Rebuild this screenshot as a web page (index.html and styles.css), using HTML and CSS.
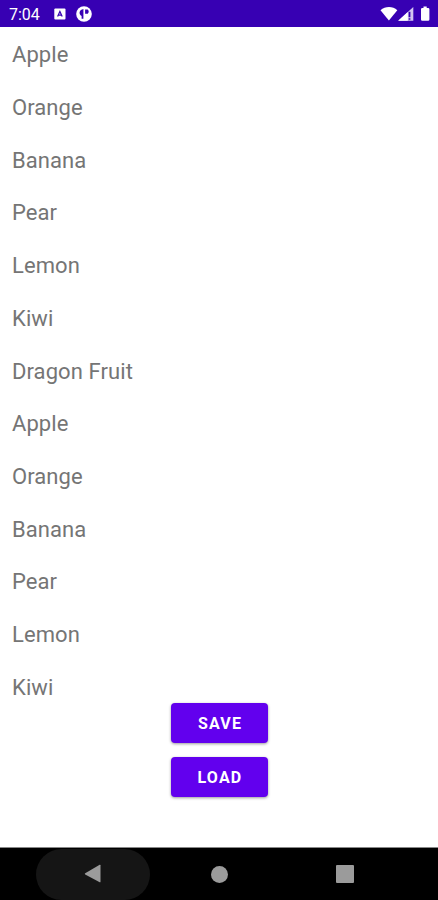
FILE: index.html
```html
<!DOCTYPE html>
<html lang="en">
<head>
<meta charset="utf-8">
<title>Fruit list</title>
<link rel="stylesheet" href="styles.css">
</head>
<body>
<div class="screen">
  <header class="status">
    <span class="time">7:04</span>
    <svg class="app-icon" viewBox="0 0 12 12"><rect x=".3" y=".5" width="11.2" height="11" rx="1" fill="#fff"/><path d="M3.6 8.6 5.9 3.4l2.3 5.2M4.4 7.2h3" fill="none" stroke="#3700b3" stroke-width="1.2"/></svg>
    <svg class="pocket-icon" viewBox="0 0 16 16"><circle cx="8" cy="8" r="7.8" fill="#fff"/><path d="M7.4 3v9.8H5.6V10C3.900 9 3.400 7.700 3.600 6.300 4 4.500 5.400 3.300 7.400 3zM9.100 3.500h2.600q1 .8 1 2.100t-1 2.200H9.100z" fill="#3700b3"/></svg>
    <svg class="signals" viewBox="0 0 54 18">
      <path d="M.5 5.3C5.3.9 12.7.9 17.3 5.3L8.9 15.6z" fill="#fff"/>
      <path d="M18.2 15.7 33.3 2v13.7z" fill="#d3c7f0"/>
      <path d="M18.2 15.7 27.8 7v8.7z" fill="#fff"/>
      <path d="M28.6 6.800h1.800v5.400h-1.800zM28.6 13.200h1.800v1.500h-1.800z" fill="#3700b3"/>
      <path d="M41 4.2q0-1.3 1.3-1.3h1.2V1.6h3.2v1.3h1.4q1.3 0 1.3 1.3v10.3q0 1.3-1.3 1.3h-5.8q-1.3 0-1.3-1.3z" fill="#fff"/>
    </svg>
  </header>
  <main>
    <ul class="list">
      <li>Apple</li><li>Orange</li><li>Banana</li><li>Pear</li><li>Lemon</li><li>Kiwi</li><li>Dragon Fruit</li>
      <li>Apple</li><li>Orange</li><li>Banana</li><li>Pear</li><li>Lemon</li><li>Kiwi</li>
    </ul>
    <div class="actions">
      <button>SAVE</button>
      <button>LOAD</button>
    </div>
  </main>
  <nav class="nav">
    <div class="back"><svg viewBox="0 0 18 20"><path d="M1.2 9.2 15.7.8q.8-.3.8.5v16.4q0 .8-.8.5L1.2 10.4q-.9-.6 0-1.2z" fill="#9b9b9b"/></svg></div>
    <div class="home"></div>
    <div class="recent"></div>
  </nav>
</div>
</body>
</html>
```
FILE: styles.css
```css
body {
  margin: 0;
  background: #fff;
  font-family: Roboto, sans-serif;
}
.screen {
  display: flex;
  flex-direction: column;
  height: 900px;
  overflow: hidden;
}
.status {
  display: flex;
  align-items: center;
  box-sizing: border-box;
  height: 27px;
  padding: 1px 4px 0 9px;
  background: #3700b3;
  color: #fff;
}
.time {
  width: 45px;
  padding-top: 1px;
  font-size: 16px;
  line-height: 20px;
}
.app-icon {
  width: 12px;
  height: 12px;
}
.pocket-icon {
  width: 16px;
  height: 16px;
  margin-left: 10px;
}
.signals {
  width: 54px;
  height: 18px;
  margin-left: auto;
}
main {
  flex: 1;
}
.list {
  height: 676px;
  margin: 0;
  box-sizing: border-box;
  padding: 1.4px 12px 0;
  list-style: none;
  color: #757575;
  font-size: 22px;
  letter-spacing: .08px;
}
.list li {
  height: 52.7px;
  line-height: 53px;
}
.list li:last-child {
  height: auto;
}
.actions {
  display: flex;
  flex-direction: column;
  align-items: center;
  gap: 14px;
}
.actions button {
  width: 97px;
  height: 40px;
  padding: 1px 0 0 2px;
  border: 0;
  border-radius: 4px;
  background: #6200ee;
  box-shadow: 0 1px 3px rgba(0, 0, 0, .4);
  color: #fff;
  font: 700 16px/39px Roboto, sans-serif;
  letter-spacing: 1.2px;
}
.nav {
  display: flex;
  align-items: center;
  box-sizing: border-box;
  height: 53px;
  padding-left: 36px;
  border-top: 1px solid #888;
  background: #000;
}
.back {
  display: flex;
  align-items: center;
  justify-content: center;
  width: 114px;
  height: 51px;
  border-radius: 26px;
  background: #151515;
}
.back svg {
  width: 18px;
  height: 20px;
}
.home {
  width: 17px;
  height: 17px;
  margin-left: 61px;
  border-radius: 50%;
  background: #9b9b9b;
}
.recent {
  width: 18px;
  height: 18px;
  margin-left: 108px;
  border-radius: 1px;
  background: #9b9b9b;
}
```
